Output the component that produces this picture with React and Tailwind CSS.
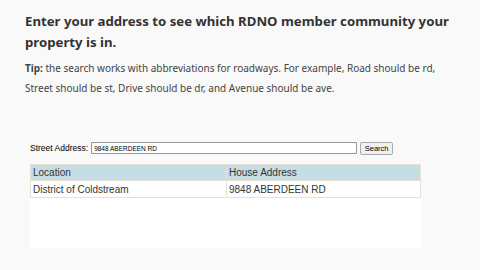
import React from 'react';

const rows = [{ location: 'District of Coldstream', address: '9848 ABERDEEN RD' }];

const App = () => {
  return (
    <div className="h-[270px] w-[480px] overflow-hidden bg-[#f9f9f9] text-[#333]">
      {/* Intro */}
      <div className="pl-[25px] pr-[20px] pt-[11px]" style={{ fontFamily: '"Noto Sans", Lato, sans-serif' }}>
        <h2 className="text-[13.2px] font-bold leading-[21px] text-[#333]">
          Enter your address to see which RDNO member community your property is in.
        </h2>
        <p className="mt-[5px] text-[10px] leading-[20px] text-[#444]">
          <strong>Tip:</strong> the search works with abbreviations for roadways. For example, Road should be rd,
          Street should be st, Drive should be dr, and Avenue should be ave.
        </p>
      </div>

      {/* Lookup frame */}
      <div className="mt-[43px] pl-[30px] pr-[59px]" style={{ fontFamily: '"Liberation Sans", Arial, sans-serif' }}>
        <div className="flex h-[14px] items-center">
          <span className="text-[8.5px] text-black">Street Address:</span>
          <input
            readOnly
            value="9848 ABERDEEN RD"
            className="ml-[3px] h-[12px] w-[266px] border border-[#999] bg-white px-[2px] text-[6.5px] text-black outline-none"
          />
          <button className="ml-[3px] h-[13px] w-[33px] rounded-[2px] border border-[#aaa] bg-[#f0f0f0] text-[7.5px] text-black">
            Search
          </button>
        </div>

        <div className="mt-[9px] h-[84px] bg-white">
          <table className="w-full border-collapse text-[10px]">
            <thead>
              <tr className="bg-[#c7dde5]">
                <th className="h-[16px] w-[196px] border border-[#e6e1d3] px-[2px] text-left font-normal">Location</th>
                <th className="h-[16px] border border-[#e6e1d3] px-[2px] text-left font-normal">House Address</th>
              </tr>
            </thead>
            <tbody>
              {rows.map((r) => (
                <tr key={r.address}>
                  <td className="h-[17px] border border-[#e6e1d3] px-[2px]">{r.location}</td>
                  <td className="h-[17px] border border-[#e6e1d3] px-[2px]">{r.address}</td>
                </tr>
              ))}
            </tbody>
          </table>
        </div>
      </div>
    </div>
  );
};

export default App;
